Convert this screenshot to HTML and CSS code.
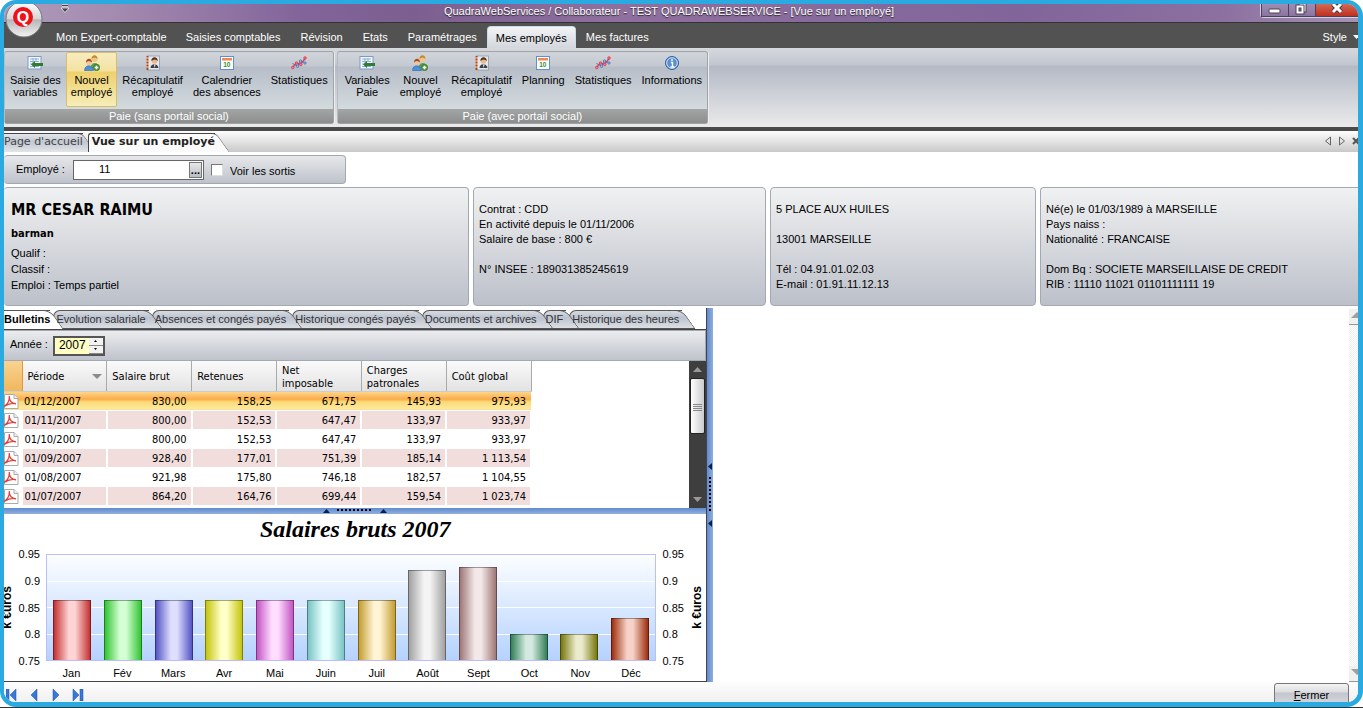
FILE: index.html
```html
<!DOCTYPE html>
<html lang="fr">
<head>
    <meta charset="UTF-8">
    <meta name="viewport" content="width=device-width, initial-scale=1.0">
    <title>QuadraWebServices - Vue sur un employé</title>
    <link rel="stylesheet" href="styles.css">
</head>
<body>
    <!-- Icon sprites -->
    <svg class="sprites" aria-hidden="true">
        <symbol id="i-variables" viewBox="0 0 16 16">
            <rect x="1" y="1.500" width="13" height="12.500" fill="#f4f8fd" stroke="#7d9cc4"/>
            <path d="M3 4h9M3 6.500h9M3 9h3M3 11.500h9M6 3v9M9 3v4" stroke="#8fb0d6" fill="none"/>
            <path d="M4 9.500 8 6v2h8v3H8v2z" fill="#2f7d32"/>
        </symbol>
        <symbol id="i-people" viewBox="0 0 16 16">
            <circle cx="10.500" cy="4" r="3" fill="#f0c48a"/><path d="M7.500 4c0-5 6-5 6 0-2-2-4-2-6 0z" fill="#c58a1f"/>
            <path d="M6.500 13c0-6 8-7 9 0z" fill="#5aa05a"/>
            <circle cx="5" cy="7.500" r="2.800" fill="#f3c59b"/><path d="M2 7.500c0-5 6-5 6 0-2-2-4-2-6 0z" fill="#a34b22"/>
            <path d="M.5 15.500c0-6 8-6.500 9 0z" fill="#4f8fd8" stroke="#2c66ac" stroke-width=".6"/>
            <circle cx="12.500" cy="12.500" r="3.200" fill="#4f9a3c" stroke="#2f6d22" stroke-width=".6"/><path d="M12.500 10.700v3.600M10.700 12.500h3.600" stroke="#fff" stroke-width="1.400"/>
        </symbol>
        <symbol id="i-book" viewBox="0 0 16 16">
            <rect x="2.500" y="1" width="12" height="14" fill="#e4e8ee" stroke="#8f99a8" stroke-width=".8"/>
            <path d="M2.500 1v14" stroke="#a8481c" stroke-width="2"/><path d="M1 3h3M1 6h3M1 9h3M1 12h3" stroke="#f2d7b8"/>
            <circle cx="9.500" cy="6" r="2.700" fill="#eeb985"/><path d="M6.300 6c0-5 6.500-5 6.500 0-2-2-4-2-6.500 0z" fill="#53301a"/>
            <path d="M5.500 13c0-5 7.500-5 8 0z" fill="#3c4149"/><path d="M9 9.500h1.500L9.800 13z" fill="#fff"/>
        </symbol>
        <symbol id="i-calendar" viewBox="0 0 16 16">
            <rect x="1.500" y="1.500" width="13" height="13" fill="#fff" stroke="#5f8fcf"/>
            <rect x="3" y="3" width="10" height="2.500" fill="#f08a4b"/>
            <text x="4.200" y="12" font-size="6.500" font-weight="bold" font-family="Liberation Sans, sans-serif" fill="#3f8b3a">10</text>
        </symbol>
        <symbol id="i-stats" viewBox="0 0 16 16">
            <path d="m1.500 12.500 4-4.500 4 1.500 5-6.500" fill="none" stroke="#e8404a" stroke-width="1.400"/>
            <path d="m1.500 8.500 5 2.500 3-5 5 2" fill="none" stroke="#4a78c8"/>
            <g fill="#f47a80" stroke="#d8323d" stroke-width=".7"><circle cx="1.800" cy="12.500" r="1.300"/><circle cx="5.500" cy="8" r="1.300"/><circle cx="9.800" cy="9.500" r="1.300"/><circle cx="14" cy="3" r="1.300"/></g>
            <g fill="#9dbcf0" stroke="#3b66b5" stroke-width=".7"><circle cx="6.500" cy="11.300" r="1.200"/><circle cx="9.500" cy="6" r="1.200"/><circle cx="14" cy="8" r="1.200"/></g>
        </symbol>
        <symbol id="i-info" viewBox="0 0 16 16">
            <circle cx="8" cy="8" r="6.500" fill="#5b8fd0" stroke="#2f5f9f"/><circle cx="8" cy="8" r="5.300" fill="none" stroke="#cfe0f5"/>
            <path d="M8 4v2M6.800 7.500H8.500V12M6.500 12h4" stroke="#fff" stroke-width="1.400" fill="none"/>
        </symbol>
        <symbol id="i-pdf" viewBox="0 0 15 16">
            <path d="M.5 1.500h9.500l4 4v10H.5z" fill="#fff" stroke="#aaa"/><path d="M10 1.500v4h4" fill="#f0f0f0" stroke="#aaa"/>
            <path d="M0 13.500c3.500-2 5.500-6 5.300-10.500C5 8 8 10.500 12 10.800 8 9.800 4.500 10.800 0 13.500z" fill="none" stroke="#e23a34" stroke-width="1.200"/>
        </symbol>
    </svg>

    <div class="window">
        <header class="titlebar">
            <div class="quick"><svg viewBox="0 0 8 9" width="8" height="9"><path d="M1 1.500h6" stroke="#fff" stroke-width="2"/><path d="M1 1.500h6" stroke="#444"/><path d="M0 4h8L4 8.500z" fill="#444" stroke="#fff" stroke-width=".7"/></svg></div>
            <div class="window-title">QuadraWebServices / Collaborateur - TEST QUADRAWEBSERVICE - [Vue sur un employé]</div>
            <div class="window-buttons">
                <button type="button" aria-label="Réduire"><svg width="14" height="12"><rect x="1" y="5" width="11" height="4" rx="1" fill="#fff" stroke="#4b4059"/></svg></button>
                <button type="button" aria-label="Restaurer"><svg width="14" height="12"><rect x="4" y="-1" width="7" height="9" fill="#fff" stroke="#4b4059"/><rect x="1" y="1" width="8" height="9" fill="#fff" stroke="#4b4059"/><rect x="4" y="4" width="2" height="3" fill="#8b789d" stroke="#4b4059"/></svg></button>
                <button type="button" class="close" aria-label="Fermer la fenêtre"><svg width="14" height="12"><path d="m3 0 8 8m0-8-8 8" stroke="#4b3a44" stroke-width="5"/><path d="m3 0 8 8m0-8-8 8" stroke="#fff" stroke-width="3"/></svg></button>
            </div>
        </header>
        <button type="button" class="orb" aria-label="Menu principal">
            <svg viewBox="0 0 38 38" width="38" height="38">
                <defs><linearGradient id="orb" x2="0" y2="1"><stop offset="0" stop-color="#fff"/><stop offset=".5" stop-color="#d6d6d8"/><stop offset=".52" stop-color="#b5b5b8"/><stop offset="1" stop-color="#f4f4f4"/></linearGradient></defs>
                <circle cx="19" cy="19" r="18" fill="url(#orb)" stroke="#777"/>
                <circle cx="18" cy="17" r="10" fill="#f01018"/>
                <text x="18" y="23" text-anchor="middle" font-family="Liberation Sans, sans-serif" font-size="16" font-weight="bold" fill="#fff">Q</text>
            </svg>
        </button>

        <nav class="menu">
            <a href="#">Mon Expert-comptable</a>
            <a href="#">Saisies comptables</a>
            <a href="#">Révision</a>
            <a href="#">Etats</a>
            <a href="#">Paramétrages</a>
            <a href="#" class="active">Mes employés</a>
            <a href="#">Mes factures</a>
            <a href="#" class="style-link">Style <svg width="7" height="4"><path d="M0 0h7L3.500 4z" fill="#fff"/></svg></a>
        </nav>

        <div class="ribbon">
            <section class="group">
                <div class="tools">
                    <button type="button"><svg><use href="#i-variables"/></svg>Saisie des<br>variables</button>
                    <button type="button" class="selected"><svg><use href="#i-people"/></svg>Nouvel<br>employé</button>
                    <button type="button"><svg><use href="#i-book"/></svg>Récapitulatif<br>employé</button>
                    <button type="button"><svg><use href="#i-calendar"/></svg>Calendrier<br>des absences</button>
                    <button type="button"><svg><use href="#i-stats"/></svg>Statistiques</button>
                </div>
                <div class="caption">Paie (sans portail social)</div>
            </section>
            <section class="group portal">
                <div class="tools">
                    <button type="button"><svg><use href="#i-variables"/></svg>Variables<br>Paie</button>
                    <button type="button"><svg><use href="#i-people"/></svg>Nouvel<br>employé</button>
                    <button type="button"><svg><use href="#i-book"/></svg>Récapitulatif<br>employé</button>
                    <button type="button"><svg><use href="#i-calendar"/></svg>Planning</button>
                    <button type="button"><svg><use href="#i-stats"/></svg>Statistiques</button>
                    <button type="button"><svg><use href="#i-info"/></svg>Informations</button>
                </div>
                <div class="caption">Paie (avec portail social)</div>
            </section>
        </div>

        <nav class="doc-tabs">
            <a href="#" class="doc-tab">Page d'accueil</a>
            <a href="#" class="doc-tab active">Vue sur un employé</a>
            <div class="doc-controls">
                <svg width="8" height="10"><path d="M6.500 1v8L1.500 5z" fill="none" stroke="#666"/></svg>
                <svg width="8" height="10"><path d="M1.500 1v8l5-4z" fill="none" stroke="#666"/></svg>
                <svg width="8" height="10"><path d="m1 2 6 6m0-6L1 8" stroke="#555" stroke-width="2"/></svg>
            </div>
        </nav>

        <main class="content">
            <form class="search panel">
                <label for="employe">Employé :</label>
                <span class="lookup"><input id="employe" type="text" value="11"><button type="button">...</button></span>
                <input id="sortis" type="checkbox"><label for="sortis" class="check-label">Voir les sortis</label>
            </form>

            <div class="cards">
                <section class="card panel identity">
                    <h1>MR CESAR RAIMU</h1>
                    <h2>barman</h2>
                    <p>Qualif :</p>
                    <p>Classif :</p>
                    <p>Emploi : Temps partiel</p>
                </section>
                <section class="card panel">
                    <p>Contrat : CDD</p>
                    <p>En activité depuis le 01/11/2006</p>
                    <p>Salaire de base : 800 €</p>
                    <p class="skip">N° INSEE : 189031385245619</p>
                </section>
                <section class="card panel">
                    <p>5 PLACE AUX HUILES</p>
                    <p class="skip">13001 MARSEILLE</p>
                    <p class="skip">Tél : 04.91.01.02.03</p>
                    <p>E-mail : 01.91.11.12.13</p>
                </section>
                <section class="card panel">
                    <p>Né(e) le 01/03/1989 à MARSEILLE</p>
                    <p>Pays naiss :</p>
                    <p>Nationalité : FRANCAISE</p>
                    <p class="skip">Dom Bq : SOCIETE MARSEILLAISE DE CREDIT</p>
                    <p>RIB : 11110 11021 01101111111 19</p>
                </section>
            </div>

            <div class="split">
                <div class="left-pane">
                    <nav class="tabs">
                        <a href="#" class="tab active">Bulletins</a>
                        <a href="#" class="tab">Evolution salariale</a>
                        <a href="#" class="tab">Absences et congés payés</a>
                        <a href="#" class="tab">Historique congés payés</a>
                        <a href="#" class="tab">Documents et archives</a>
                        <a href="#" class="tab">DIF</a>
                        <a href="#" class="tab">Historique des heures</a>
                    </nav>
                    <div class="year-bar">
                        <label for="annee">Année :</label>
                        <span class="spin">
                            <input id="annee" type="text" value="2007">
                            <span class="spin-buttons"><button type="button" aria-label="Plus"><svg width="5" height="3"><path d="M2.500 0 4 2H1z"/></svg></button><button type="button" aria-label="Moins"><svg width="5" height="3"><path d="M1 0h3L2.500 2z"/></svg></button></span>
                        </span>
                    </div>
                    <div class="grid">
                        <div class="grid-view">
                            <table>
                                <thead>
                                    <tr>
                                        <th class="mark"></th>
                                        <th>Période <svg width="10" height="5"><path d="M0 0h10L5 5z" fill="#8b8b8b"/></svg></th>
                                        <th>Salaire brut</th><th>Retenues</th><th>Net<br>imposable</th><th>Charges<br>patronales</th><th>Coût global</th>
                                    </tr>
                                </thead>
                                <tbody>
                                    <tr class="current"><td><svg><use href="#i-pdf"/></svg></td><td>01/12/2007</td><td>830,00</td><td>158,25</td><td>671,75</td><td>145,93</td><td>975,93</td></tr>
                                    <tr><td><svg><use href="#i-pdf"/></svg></td><td>01/11/2007</td><td>800,00</td><td>152,53</td><td>647,47</td><td>133,97</td><td>933,97</td></tr>
                                    <tr><td><svg><use href="#i-pdf"/></svg></td><td>01/10/2007</td><td>800,00</td><td>152,53</td><td>647,47</td><td>133,97</td><td>933,97</td></tr>
                                    <tr><td><svg><use href="#i-pdf"/></svg></td><td>01/09/2007</td><td>928,40</td><td>177,01</td><td>751,39</td><td>185,14</td><td>1 113,54</td></tr>
                                    <tr><td><svg><use href="#i-pdf"/></svg></td><td>01/08/2007</td><td>921,98</td><td>175,80</td><td>746,18</td><td>182,57</td><td>1 104,55</td></tr>
                                    <tr><td><svg><use href="#i-pdf"/></svg></td><td>01/07/2007</td><td>864,20</td><td>164,76</td><td>699,44</td><td>159,54</td><td>1 023,74</td></tr>
                                    <tr><td><svg><use href="#i-pdf"/></svg></td><td></td><td></td><td></td><td></td><td></td><td></td></tr>
                                </tbody>
                            </table>
                        </div>
                        <div class="dark-scroll">
                            <svg width="9" height="5"><path d="M0 5h9L4.500 0z" fill="#999"/></svg>
                            <div class="thumb"><i></i></div>
                            <svg width="9" height="5"><path d="M0 0h9L4.500 5z" fill="#999"/></svg>
                        </div>
                    </div>
                    <div class="splitter-h">
                        <svg width="66" height="5"><path d="M1 5h7L4.500 1zM58 5h7L61.500 1z" fill="#0b1f4a"/><path d="M15 2h35" stroke="#000" stroke-width="2" stroke-dasharray="2 2"/></svg>
                    </div>
                    <div class="chart">
                        <h3>Salaires bruts 2007</h3>
                        <div class="axis-name">k €uros</div>
                        <div class="ticks"><span>0.95</span><span>0.9</span><span>0.85</span><span>0.8</span><span>0.75</span></div>
                        <div class="plot">
                            <div class="lines"><i></i><i></i><i></i><i></i></div>
                            <div class="slot"><div class="bar jan" style="height:57%"></div></div>
                            <div class="slot"><div class="bar fev" style="height:57%"></div></div>
                            <div class="slot"><div class="bar mars" style="height:57%"></div></div>
                            <div class="slot"><div class="bar avr" style="height:57%"></div></div>
                            <div class="slot"><div class="bar mai" style="height:57%"></div></div>
                            <div class="slot"><div class="bar juin" style="height:57%"></div></div>
                            <div class="slot"><div class="bar juil" style="height:57%"></div></div>
                            <div class="slot"><div class="bar aout" style="height:86%"></div></div>
                            <div class="slot"><div class="bar sept" style="height:89%"></div></div>
                            <div class="slot"><div class="bar oct" style="height:25%"></div></div>
                            <div class="slot"><div class="bar nov" style="height:25%"></div></div>
                            <div class="slot"><div class="bar dec" style="height:40%"></div></div>
                        </div>
                        <div class="ticks right"><span>0.95</span><span>0.9</span><span>0.85</span><span>0.8</span><span>0.75</span></div>
                        <div class="axis-name right">k €uros</div>
                        <div class="months"><span>Jan</span><span>Fév</span><span>Mars</span><span>Avr</span><span>Mai</span><span>Juin</span><span>Juil</span><span>Août</span><span>Sept</span><span>Oct</span><span>Nov</span><span>Déc</span></div>
                    </div>
                </div>
                <div class="splitter-v">
                    <svg width="5" height="66"><path d="M5 1v7L1 4.500zM5 58v7L1 61.500z" fill="#0b1f4a"/><path d="M3 15v35" stroke="#000" stroke-width="2" stroke-dasharray="2 2"/></svg>
                </div>
                <div class="right-pane">
                    <div class="light-scroll">
                        <span><svg width="12" height="6"><path d="M0 6h12L6 0z" fill="#a0a0a0"/></svg></span>
                        <span><svg width="12" height="6"><path d="M0 0h12L6 6z" fill="#a0a0a0"/></svg></span>
                    </div>
                </div>
            </div>
        </main>

        <footer class="footer">
            <div class="pager">
                <button type="button" aria-label="Premier"><svg width="12" height="12"><path d="M0 0h3v12H0zM10 0v12L4 6z"/></svg></button>
                <button type="button" aria-label="Précédent"><svg width="12" height="12"><path d="M9 0v12L3 6z"/></svg></button>
                <button type="button" aria-label="Suivant"><svg width="12" height="12"><path d="M3 0v12l6-6z"/></svg></button>
                <button type="button" aria-label="Dernier"><svg width="12" height="12"><path d="M1 0v12l6-6zM8 0h3v12H8z"/></svg></button>
            </div>
            <button type="button" class="btn-close"><u>F</u>ermer</button>
        </footer>
    </div>
</body>
</html>
```
FILE: styles.css
```css
/* --- Base --- */
:root {
    --frame: #29abe2;
    --dark: #525252;
    --line: #444;
    --panel-border: #a3a8b3;
    --ui: "Liberation Sans", Arial, sans-serif;
    --tahoma: "DejaVu Sans Condensed", Tahoma, sans-serif;
    --verdana: "DejaVu Sans", Verdana, sans-serif;
}
*, *::before, *::after { box-sizing: border-box; margin: 0; padding: 0; }
body { height: 100vh; background: #fff; border-bottom: 1px solid #333; font: 11px/15px var(--ui); color: #000; overflow: hidden; }
button, input { font: inherit; color: inherit; }
button { border: 0; background: none; }
a { color: inherit; text-decoration: none; }
.sprites { display: none; }
.window {
    position: relative;
    display: flex;
    flex-direction: column;
    height: 100%;
    border: solid var(--frame);
    border-width: 4px 5px 5px 4px;
    border-radius: 16px;
    overflow: hidden;
}

/* --- Title bar --- */
.titlebar {
    flex: none;
    display: grid;
    grid-template-columns: 1fr auto 1fr;
    height: 19px;
    border-bottom: 1px solid #333;
    background: linear-gradient(90deg, #ad9bbb 0, #a48bb0 8%, #82649a 22%, #7c5f90 30%, #8f6f9f 45%, #81659a 75%, #8c70a0 90%, #a792b5 100%);
}
.quick { padding-left: 57px; }
.quick svg { display: block; }
.window-title { margin-right: 24px; color: #fff; font-size: 11px; line-height: 15px; text-shadow: 0 1px 1px #222; }
.window-buttons { justify-self: end; display: flex; height: 14px; border: 1px solid #d9cfe2; border-width: 0 0 1px 1px; border-radius: 0 0 0 4px; }
.window-buttons button { width: 27px; border-left: 1px solid #4b4059; border-bottom: 1px solid #4b4059; background: linear-gradient(#a08db3, #8a749f); line-height: 12px; text-align: center; overflow: hidden; }
.window-buttons .close { width: 43px; background: linear-gradient(#d06a58, #c0301c); }
.orb { position: absolute; left: 1px; top: -4px; width: 38px; height: 38px; z-index: 2; }
.orb svg { display: block; }

/* --- Menu --- */
.menu { flex: none; display: flex; align-items: flex-end; height: 25px; padding-left: 42px; background: var(--dark); color: #fff; }
.menu a { height: 22px; padding: 0 10px; line-height: 22px; white-space: nowrap; }
.menu a:first-child { padding-right: 9px; }
.menu .active { padding: 0 8px; color: #000; background: linear-gradient(#f5f5f7, #d3d6dc); border: 1px solid #c5dfe4; border-bottom: 0; border-radius: 4px 4px 0 0; }
.menu .style-link { display: flex; align-items: center; gap: 6px; margin: 0 -12px 0 auto; }

/* --- Ribbon --- */
.ribbon {
    flex: none;
    display: flex;
    gap: 3px;
    height: 83px;
    padding-top: 3px;
    border-bottom: 4px solid #4a4a4a;
    background: linear-gradient(#d6d9de 0, #c1c5cf 17px, #b4bac5 18px, #c4c8d1 36px, #eaeaea 100%);
}
.group { display: flex; flex-direction: column; height: 73px; border: 1px solid #a0a3a8; border-left-color: #b8bbc0; border-radius: 3px; background: linear-gradient(#d0d4da 0, #c4c9d1 14px, #b6bdc8 15px, #dde5e5 100%); box-shadow: 1px 0 #eee; }
.tools { flex: 1; display: flex; align-items: stretch; }
.portal .tools { padding-left: 2px; }
.tools button { display: flex; flex-direction: column; align-items: center; padding: 2px 4px 0; line-height: 12px; white-space: nowrap; border: 1px solid transparent; border-radius: 2px; }
.tools button svg { width: 16px; height: 16px; margin-bottom: 3px; flex: none; }
.tools .selected { height: 55px; border-color: #d9bd6b; background: linear-gradient(#f7ecc2 0, #f3e2a0 18px, #eed06b 19px, #f6edb9 100%); }
.caption { height: 14px; line-height: 15px; text-align: center; color: #fff; background: linear-gradient(#a4a6a6, #8c8e8e); }

/* --- Document tabs --- */
.doc-tabs { flex: none; display: flex; align-items: flex-end; height: 21px; background: linear-gradient(#fdfdfd, #c9c9c9); font-family: var(--verdana); }
.doc-tab { position: relative; height: 19px; line-height: 17px; color: #444; white-space: nowrap; isolation: isolate; }
.doc-tab::before, .doc-tab::after { content: ""; position: absolute; z-index: -1; top: 0; bottom: 0; border-top: 1px solid var(--line); background: linear-gradient(#e3e6ea, #c2c8d2 45%, #e3e5e8); }
.doc-tab::before { left: 0; right: 0; }
.doc-tab::after { right: -6px; width: 16px; border-right: 1px solid #777; transform: skewX(35deg); border-radius: 0 5px 0 0; }
.doc-tab.active { margin-left: 5px; padding-left: 4px; font-weight: bold; color: #222; }
.doc-tab.active::before { border-left: 1px solid var(--line); border-radius: 3px 0 0 0; background: #fafafa; }
.doc-tab.active::after { right: -8px; background: #fafafa; }
.doc-controls { display: flex; gap: 6px; margin: 0 -2px 0 auto; height: 16px; }

/* --- Employee --- */
.content { flex: 1; min-height: 0; display: flex; flex-direction: column; background: #fff; }
.panel { border: 1px solid var(--panel-border); border-radius: 4px; background: linear-gradient(#f0f1f2, #bcc0c9); }
.search { flex: none; display: flex; align-items: center; width: 342px; height: 29px; margin-top: 3px; padding-left: 12px; border-left: 0; background: linear-gradient(#e6e8ea, #bec2cb); }
.lookup { display: flex; width: 131px; height: 20px; margin: 0 7px 0 8px; padding: 1px; border: 1px solid #666; background: #fff; }
.lookup input { width: 114px; padding-left: 24px; border: 0; background: #fff; outline: 0; }
.lookup button { width: 15px; border: 1px solid #777; background: linear-gradient(#e8e8ea, #b9bcc4); font-weight: bold; line-height: 12px; }
.search input[type="checkbox"] { appearance: none; width: 12px; height: 12px; background: #fff; border: 1px solid #777; border-right-color: #ddd; border-bottom-color: #ddd; }
.check-label { margin-left: 7px; padding-top: 4px; }
.cards { flex: none; display: grid; grid-template-columns: 465fr 293fr 266fr 318fr; gap: 4px; margin-top: 3px; }
.card { height: 119px; padding: 14px 5px 0; white-space: nowrap; overflow: hidden; }
.card:first-child { border-left: 0; }
.card:last-child { border-right: 0; border-radius: 4px 0 0 4px; }
.skip { margin-top: 15px; }
.identity { padding: 12px 7px 0; line-height: 16px; }
.identity h1 { font: bold 16px/20px var(--tahoma); }
.identity h2 { font: bold 11px/16px var(--tahoma); margin: 6px 0 3px; }

/* --- Split area --- */
.split { flex: 1; min-height: 0; display: flex; margin-top: 2px; }
.left-pane { flex: 703; min-width: 0; display: flex; flex-direction: column; border-right: 1px solid var(--line); border-bottom: 1px solid var(--line); }
.right-pane { flex: 645; min-width: 0; display: flex; justify-content: flex-end; overflow: hidden; }
.splitter-v { width: 6px; display: flex; align-items: center; background: linear-gradient(90deg, #5f8bd0, #91aede); }
.splitter-h { flex: none; height: 6px; display: flex; justify-content: center; background: linear-gradient(#5f8bd0, #91aede); }

/* Tab shapes stack left over right, all of them below the labels */
.tabs { flex: none; display: flex; height: 22px; padding-top: 2px; border-bottom: 1px solid var(--line); isolation: isolate; }
.tab { position: relative; height: 19px; padding: 0 3px; margin-left: 3px; line-height: 18px; color: #333; white-space: nowrap; }
.tab::before, .tab::after { content: ""; position: absolute; z-index: var(--z); top: 0; bottom: 0; border: 1px solid #555; background: linear-gradient(#d8dbe0, #bcc3cf 40%, #dcdfe4); }
.tab::before { left: 0; right: 0; border-right: 0; border-radius: 7px 0 0 9px; }
.tab::after { right: -7px; width: 14px; border-left: 0; border-radius: 0 7px 0 0; transform: skewX(35deg); }
.tab:nth-child(1) { --z: -1; }
.tab:nth-child(2) { --z: -2; }
.tab:nth-child(3) { --z: -3; }
.tab:nth-child(4) { --z: -4; }
.tab:nth-child(5) { --z: -5; }
.tab:nth-child(6) { --z: -6; }
.tab:nth-child(7) { --z: -7; }
.tab.active { margin-left: 0; padding: 0; color: #000; font-weight: bold; }
.tab.active::before { background: #fff; border-radius: 0; border-width: 1px 0 0; }
.tab.active::after { background: #fff; border-bottom: 0; }

.year-bar { flex: none; display: flex; align-items: center; height: 31px; padding-left: 6px; border: 1px solid var(--panel-border); border-left: 0; background: linear-gradient(#ebecee, #bfc3cb); }
.year-bar label { padding-bottom: 2px; }
.spin { display: flex; width: 52px; height: 20px; margin-left: 5px; border: 2px solid #555; background: #ffffc4; }
.spin input { width: 34px; padding-left: 4px; border: 0; background: none; outline: 0; font-size: 12px; }
.spin-buttons { display: flex; flex-direction: column; width: 14px; }
.spin-buttons button { flex: 1; background: #f2f2f2; border-bottom: 1px solid #888; line-height: 5px; }
.spin-buttons svg { display: block; margin: auto; }

/* --- Payslip grid --- */
.grid { flex: none; display: flex; height: 147px; font-family: var(--tahoma); }
.grid-view { flex: 1; overflow: hidden; }
table { width: 528px; table-layout: fixed; border-collapse: collapse; }
th { height: 30px; padding: 2px 5px 0; border-right: 1px solid #aaa; background: linear-gradient(#fafafa, #e2e2e2); border-bottom: 1px solid #ccc; font-weight: normal; line-height: 13px; text-align: left; }
th svg { float: right; margin: 4px -1px 0 0; }
th.mark { width: 18px; background: linear-gradient(#f9d392, #f0b75c); border-right-color: #e8953c; }
td { height: 19px; padding: 1px 4px 0; border-right: 2px solid #fff; border-bottom: 1px solid #fff; line-height: 17px; text-align: right; }
td:first-child { padding: 0; background: #fff; border-right: 1px solid #fff; }
td:first-child svg { display: block; width: 15px; height: 16px; }
td:nth-child(2) { padding: 1px 2px 0; text-align: left; }
tbody tr:nth-child(even) td:not(:first-child) { background: #f2dddd; }
tbody .current td { border-right-width: 0; background: linear-gradient(#fdd98c 0, #fba947 45%, #fcd874 55%, #fdeaa0 100%); }
.current td:not(:nth-child(2)) { padding-right: 5px; }
tbody .current td:first-child { padding: 0; }
.dark-scroll { display: flex; flex-direction: column; align-items: center; justify-content: space-between; width: 17px; padding: 6px 0; background: #3e3e3e; }
.thumb { width: 15px; height: 56px; margin: 6px 0 auto; padding-top: 25px; border: 1px solid #222; border-radius: 2px; background: linear-gradient(90deg, #fff, #c9cacc); }
.thumb i { display: block; width: 9px; height: 8px; margin: 0 auto; background: repeating-linear-gradient(#888 0 1px, transparent 1px 2px); }

/* --- Chart --- */
.chart {
    flex: 1;
    display: grid;
    grid-template-columns: 11px 25px 6px 1fr 6px 22px 22px;
    grid-template-rows: 32px 8px 1fr 8px 12px;
    line-height: 16px;
}
.chart h3 { grid-area: 1 / 1 / 2 / 8; font: italic bold 24px/30px "Liberation Serif", "Times New Roman", serif; text-align: center; }
.axis-name { grid-area: 2 / 1 / 5 / 2; writing-mode: vertical-rl; transform: rotate(180deg); justify-self: end; align-self: center; font-weight: bold; font-size: 12px; line-height: 16px; }
.axis-name.right { grid-area: 2 / 7 / 5 / 8; justify-self: end; margin-right: 1px; }
.ticks { grid-area: 2 / 2 / 5 / 3; display: flex; flex-direction: column; justify-content: space-between; text-align: right; }
.ticks.right { grid-area: 2 / 6 / 5 / 7; text-align: left; }
.plot { grid-area: 3 / 4 / 4 / 5; position: relative; display: flex; border: 1px solid #bcbcff; background: linear-gradient(#fcfeff, #b5d2ff); }
.lines { position: absolute; inset: 0; display: flex; flex-direction: column; }
.lines i { flex: 1; border-bottom: 1px solid #fff; }
.lines i:last-child { border: 0; }
.slot { position: relative; flex: 1; display: flex; align-items: flex-end; justify-content: center; }
.bar { width: 75%; border: 1px solid rgba(0,0,0,0.35); border-bottom: 0; background: linear-gradient(90deg, var(--c), var(--l) 42%, var(--l) 58%, var(--c)); background-origin: border-box; }
.months { grid-area: 4 / 4 / 6 / 5; display: flex; padding-top: 4px; }
.months span { flex: 1; text-align: center; }
.jan { --c: #c02828; --l: #ffd4d4; }
.fev { --c: #28c028; --l: #d4ffd4; }
.mars { --c: #4c4cc0; --l: #dedeff; }
.avr { --c: #c0c000; --l: #ffffc8; }
.mai { --c: #c04cc0; --l: #ffdeff; }
.juin { --c: #72c0c0; --l: #e6ffff; }
.juil { --c: #c09828; --l: #fff4d4; }
.aout { --c: #9c9c9c; --l: #f4f4f4; }
.sept { --c: #987070; --l: #f4e8e8; }
.oct { --c: #287850; --l: #d4eae0; }
.nov { --c: #707000; --l: #eaeacc; }
.dec { --c: #982400; --l: #f6d2c8; }

/* --- Right scrollbar: arrows run under the frame --- */
.light-scroll { flex: none; display: flex; flex-direction: column; justify-content: space-between; width: 17px; margin: 1px -8px 0 0; background: repeating-conic-gradient(#eee 0 25%, #fff 0 50%) 0 0 / 2px 2px; }
.light-scroll span { height: 16px; padding: 3px 2px 0; background: #f0f0f0; border-bottom: 1px solid #999; }
.light-scroll svg { display: block; }

/* --- Footer --- */
.footer { flex: none; display: flex; justify-content: space-between; height: 20px; background: linear-gradient(#fdfdfd, #f1f1f1); }
.pager { display: flex; gap: 10px; padding: 5px 0 0 2px; }
.pager svg { display: block; fill: #3a78d8; stroke: #1d4fa8; stroke-width: 0.5; }
.btn-close { width: 75px; height: 24px; margin: 1px 9px 0 0; border: 1px solid #777; border-radius: 3px; background: linear-gradient(#f4f4f5, #dcdde0 8px, #c3c6cd 9px, #d8dadd); line-height: 22px; }
```
